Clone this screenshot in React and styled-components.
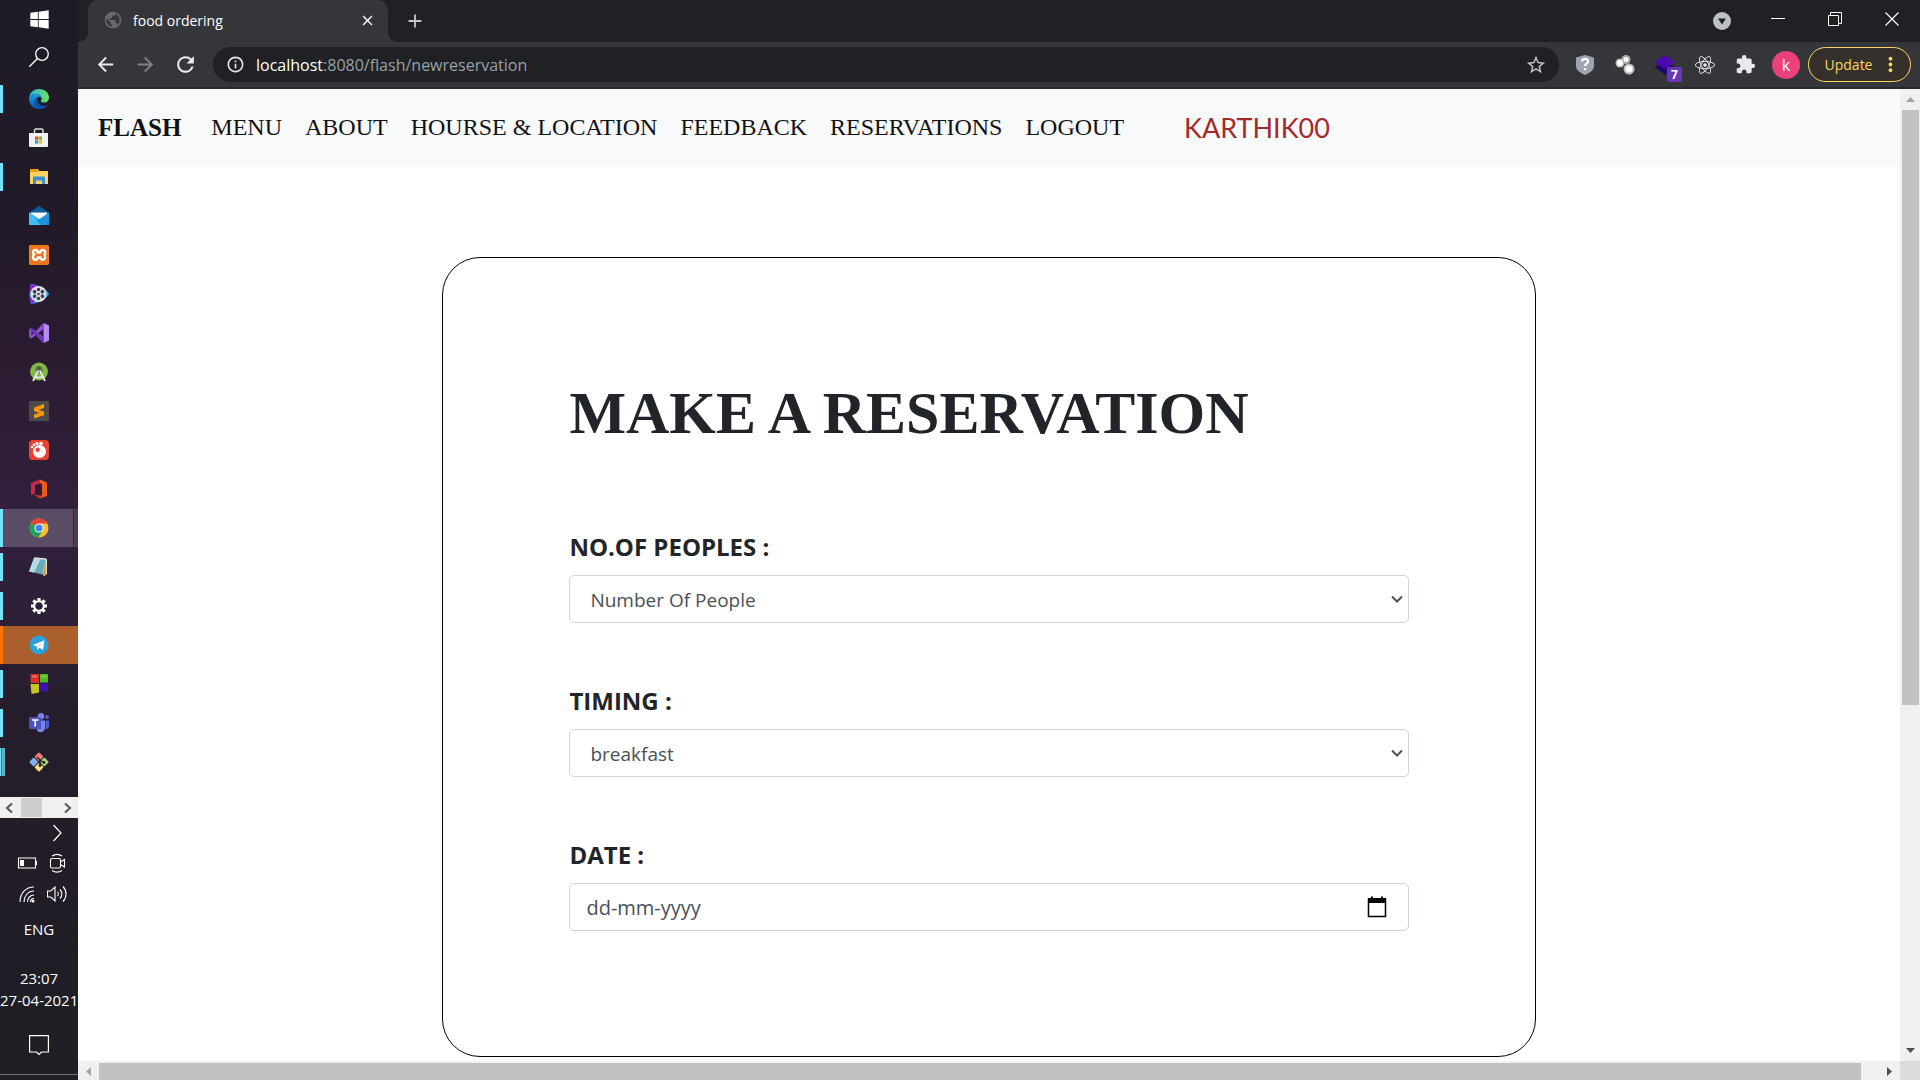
import React from "react";
import styled, { createGlobalStyle } from "styled-components";
import {
  MdArrowBack,
  MdArrowForward,
  MdClose,
  MdExtension,
  MdInfoOutline,
  MdMoreVert,
  MdPublic,
  MdRefresh,
  MdStarBorder,
  MdAdd,
} from "react-icons/md";
import { FaReact, FaWindows } from "react-icons/fa";
import { SiXampp } from "react-icons/si";

const ui = `"Segoe UI", "Open Sans", "Noto Sans", sans-serif`;
const serif = `"Liberation Serif", serif`;

const GlobalStyle = createGlobalStyle`
  * { box-sizing: border-box; }
  html, body { margin: 0; height: 100%; overflow: hidden; }
  body { font-family: ${ui}; background: #fff; }
  button, input, select { font: inherit; margin: 0; }
  button { border: 0; padding: 0; background: none; color: inherit; display: flex; align-items: center; justify-content: center; }
  svg { display: block; flex: none; }
`;

const Desktop = styled.div`
  display: flex;
  height: 100vh;
`;

/* ---------- taskbar ---------- */

const Taskbar = styled.aside`
  flex: none;
  width: 78px;
  display: flex;
  flex-direction: column;
  color: #fff;
  background: linear-gradient(#1e1b26 0%, #211a28 20%, #2d1c33 36%, #32203d 48%, #2b1f35 58%, #251d29 68%, #241c29 78%, #1f1d26 88%, #1f2025 100%);
`;

const SystemButton = styled.button`
  height: 38px;
  width: 100%;
`;

const Apps = styled.nav`
  display: flex;
  flex-direction: column;
  margin-top: 4px;
  flex: 1;
`;

const AppButton = styled.button`
  position: relative;
  height: 38px;
  width: 100%;
  margin-bottom: 1px;
  background: ${(p) => (p.$state === "active" ? "linear-gradient(90deg, #5c4d66 73px, #37293f 73px, #37293f 74px, #4b3d56 74px)" : p.$state === "alert" ? "#aa5f2c" : "none")};

  &::before {
    content: "";
    position: absolute;
    left: 0;
    top: ${(p) => (p.$state === "active" || p.$state === "alert" ? 0 : 5)}px;
    bottom: ${(p) => (p.$state === "active" || p.$state === "alert" ? 0 : 5)}px;
    width: ${(p) => (p.$state === "stack" ? 5 : p.$state ? 3 : 0)}px;
    background: ${(p) => (p.$state === "alert" ? "#ff7300" : p.$state === "stack" ? "linear-gradient(90deg, #76e3fb 1px, #3f7f90 1px, #3f7f90 2px, #5db3c8 2px)" : "#76e3fb")};
  }
`;

const TaskScroll = styled.div`
  height: 21px;
  padding: 1px 5px 1px 4px;
  display: flex;
  align-items: center;
  background: #f0f0f0;
  color: #555;
`;

const TaskThumb = styled.div`
  width: 21px;
  height: 100%;
  margin-left: 5px;
  margin-right: auto;
  background: #cdcdcd;
`;

const Tray = styled.div`
  display: grid;
  grid-template-columns: 30px 30px;
  grid-template-rows: 30px 30px 31px;
  justify-content: center;
  padding-left: 6px;
`;

const TrayButton = styled.button`
  grid-column: ${(p) => p.$column || "auto"};
`;

const TrayText = styled.div`
  margin-top: 9px;
  text-align: center;
  font-size: 15px;
  line-height: 22px;
  white-space: nowrap;
`;

const Clock = styled(TrayText)`
  margin-top: 27px;
  margin-bottom: 12px;
`;

const NoticeButton = styled.button`
  height: 43px;
  width: 100%;
`;

const TaskEnd = styled.div`
  height: 6px;
  margin-top: 8px;
  border-top: 1px solid #6f7174;
`;

/* ---------- browser frame ---------- */

const Browser = styled.div`
  flex: 1;
  min-width: 0;
  display: flex;
  flex-direction: column;
`;

const TabStrip = styled.header`
  height: 42px;
  display: flex;
  align-items: stretch;
  padding-left: 10px;
  background: #202124;
  color: #fff;
`;

const Tab = styled.div`
  position: relative;
  width: 300px;
  display: flex;
  align-items: center;
  padding: 0 12px 2px 15px;
  gap: 10px;
  font-size: 14px;
  background: #35363a;
  border-radius: 10px 10px 0 0;

  &::before, &::after {
    content: "";
    position: absolute;
    bottom: 0;
    width: 10px;
    height: 10px;
  }
  &::before { left: -10px; background: radial-gradient(circle at 0 0, #202124 10px, #35363a 10px); }
  &::after { right: -10px; background: radial-gradient(circle at 100% 0, #202124 10px, #35363a 10px); }

  button { margin-left: auto; }
`;

const NewTab = styled.button`
  width: 54px;
  color: #c4c7ca;
`;

const WindowButtons = styled.div`
  display: flex;
  margin-left: auto;
`;

const WindowButton = styled.button`
  width: 57px;
  height: 37px;
`;

const TabSearch = styled(WindowButton)`
  width: 54px;
  height: 42px;
`;

const Toolbar = styled.div`
  height: 47px;
  display: flex;
  align-items: center;
  padding: 0 9px 0 7px;
  background: #35363a;
  border-bottom: 2px solid #27282b;
  color: #e8eaed;
`;

const NavButton = styled.button`
  width: 40px;
  height: 35px;
  color: ${(p) => (p.$dim ? "#808184" : "#e8eaed")};
`;

const AddressBar = styled.div`
  flex: 1;
  height: 35px;
  margin-left: 8px;
  margin-right: 6px;
  display: flex;
  align-items: center;
  padding: 0 12px 0 13px;
  gap: 11px;
  border-radius: 18px;
  background: #202124;
  font-size: 16px;
`;

const Address = styled.div`
  flex: 1;
  color: #9aa0a6;
  span { color: #fff; }
`;

const ExtensionButton = styled.button`
  position: relative;
  width: 40px;
  height: 35px;
`;

const Badge = styled.span`
  position: absolute;
  right: 3px;
  bottom: 0;
  width: 15px;
  height: 15px;
  border-radius: 2px;
  background: #6838b8;
  color: #fff;
  font-size: 12px;
  font-weight: 700;
  line-height: 15px;
`;

const Avatar = styled.button`
  width: 28px;
  height: 28px;
  margin: 0 8px 0 7px;
  border-radius: 50%;
  background: #ec407a;
  color: #fff;
  font-size: 16px;
`;

const Update = styled.button`
  width: 103px;
  height: 35px;
  gap: 7px;
  border: 1px solid #fdd663;
  border-radius: 18px;
  background: #35302b;
  color: #fdd663;
  font-size: 14px;
  padding-left: 8px;
`;

/* ---------- page ---------- */

const Viewport = styled.div`
  flex: 1;
  min-height: 0;
  display: grid;
  grid-template-columns: minmax(0, 1fr) 20px;
  grid-template-rows: minmax(0, 1fr) 19px;
`;

const Page = styled.div`
  overflow: hidden;
  background: #fff;
`;

const Navbar = styled.nav`
  height: 77px;
  display: flex;
  align-items: center;
  padding: 0 20px;
  gap: 23px;
  background: #f8f9fa;
  font-family: ${serif};
  font-size: 24px;
`;

const Brand = styled.a`
  color: #111;
  font-size: 25px;
  font-weight: 700;
  text-decoration: none;
  margin-right: 7px;
`;

const NavLink = styled.a`
  color: #111;
  text-decoration: none;
  white-space: nowrap;
`;

const UserLink = styled.a`
  margin-left: 37px;
  color: #a52a2a;
  font-family: "Comic Sans MS", Lato, sans-serif;
  font-size: 27px;
  text-decoration: none;
`;

const Card = styled.form`
  width: 60%;
  margin: 91px auto 60px;
  padding: 119px 126px 125px;
  border: 1px solid #000;
  border-radius: 38px;
  display: flex;
  flex-direction: column;
  gap: 60px;
`;

const Title = styled.h1`
  margin: 0 0 20px;
  color: #212529;
  font-family: ${serif};
  font-size: 60px;
  line-height: 72px;
  white-space: nowrap;
`;

const Field = styled.div`
  display: flex;
  flex-direction: column;
  gap: 10px;
`;

const Label = styled.label`
  color: #212529;
  font-size: 24px;
  font-weight: 700;
  line-height: 36px;
`;

const SelectBox = styled.div`
  position: relative;
  svg { position: absolute; right: 6px; top: 18px; pointer-events: none; }
`;

const Select = styled.select`
  display: block;
  appearance: none;
  height: 48px;
  width: 100%;
  padding: 1px 30px 0 20px;
  border: 1px solid #ced4da;
  border-radius: 5px;
  background: #fff;
  color: #495057;
  font-size: 19px;
`;

const DateBox = styled.div`
  height: 48px;
  display: flex;
  align-items: center;
  padding: 0 20px 0 16px;
  border: 1px solid #ced4da;
  border-radius: 5px;
`;

const DateInput = styled.input`
  flex: 1;
  min-width: 0;
  border: 0;
  padding: 0;
  outline: 0;
  background: none;
  font-size: 20px;
  color: #495057;
  &::placeholder { color: #495057; opacity: 1; }
`;

const ScrollTrack = styled.div`
  display: flex;
  flex-direction: ${(p) => (p.$vertical ? "column" : "row")};
  background: #f0f0f0;
  padding: ${(p) => (p.$vertical ? "0 1px 0 2px" : "2px 0 0 0")};
`;

const ScrollArrow = styled.button`
  flex: none;
  width: ${(p) => (p.$vertical ? 17 : 21)}px;
  height: ${(p) => (p.$vertical ? 21 : 17)}px;
  color: ${(p) => (p.$off ? "#a3a3a3" : "#505050")};
`;

const ScrollThumb = styled.div`
  flex: ${(p) => p.$part};
  background: #c1c1c1;
`;

const ScrollRest = styled.div`
  flex: ${(p) => p.$part};
`;

const Corner = styled.div`
  background: #dcdcdc;
`;

/* ---------- drawings ---------- */

const Icon = ({ size = 20, children, box = "0 0 20 20" }) => (
  <svg width={size} height={size} viewBox={box} fill="none" aria-hidden="true">
    {children}
  </svg>
);

const Triangle = ({ turn }) => (
  <svg width="9" height="9" viewBox="0 0 9 9" fill="currentColor" transform={`rotate(${turn})`} aria-hidden="true">
    <path d="M0 7 4.500 2 9 7z" />
  </svg>
);

const Chevron = () => (
  <Icon size={12} box="0 0 12 12"><path d="M1 3.500 6 8.500 11 3.500" stroke="#495057" strokeWidth="2" /></Icon>
);

const XamppTile = styled.span`
  width: 20px;
  height: 20px;
  background: #fff;
  border-radius: 3px;
`;

const apps = [
  ["Edge", "open", <Icon>
    <defs>
      <linearGradient id="edgeGreen" x1="0" x2="1"><stop stopColor="#2fb5e8" /><stop offset="1" stopColor="#6be05a" /></linearGradient>
      <linearGradient id="edgeBlue" x1="0" x2="0" y1="0" y2="1"><stop stopColor="#1b9de2" /><stop offset="1" stopColor="#0d57a8" /></linearGradient>
    </defs>
    <path d="M0 9C1 3 5 0 10 0c6 0 10 4 10 8.500 0 3-2 5-5 5-2 0-3.500-.7-3.300-1.500.8-1 1-1.700 1-2.500C12.500 7 10 5 6.500 5 3.500 5 1 6.500 0 9z" fill="url(#edgeGreen)" />
    <path d="M0 10c0-3 3-5 6.500-5 3.500 0 6 2 6 4.500-1-1.700-2.500-2-3.500-1.300-3 1.500-3.500 5.500-1 8 3 3 7 2.500 10.500.3C16.500 19 13.500 20 10 20 4 20 0 15.500 0 10z" fill="url(#edgeBlue)" />
    <path d="M9 8.200c-4 1.800-4.500 6-2.500 8.800 2 2.500 5 3.200 8 2 2-.8 3.500-1.900 4.200-3.200-3.500 1.700-7.200.9-9-1.600-1.300-1.900-1.500-4-.7-6z" fill="#0c4fa0" />
  </Icon>],
  ["Store", "", <Icon>
    <path d="M5.500 6V2.500c0-.8.500-1.500 1.500-1.500h5.500c1 0 1.500.7 1.500 1.500V6" stroke="#ddd" strokeWidth="1.500" />
    <path d="M0 5h19v13a1 1 0 0 1-1 1H1a1 1 0 0 1-1-1z" fill="#f1f1f1" />
    <path d="M6 8.500h3.300v3.300H6z" fill="#e2512c" /><path d="M9.800 8.500h3.300v3.300H9.800z" fill="#7db72f" />
    <path d="M6 12.300h3.300v3.300H6z" fill="#23a0e0" /><path d="M9.800 12.300h3.300v3.300H9.800z" fill="#fdb913" />
  </Icon>],
  ["Explorer", "open", <Icon>
    <path d="M1 2h8l1 2h9v13H1z" fill="#fdd260" /><path d="M1 2h8l1 2-1 1H1z" fill="#e5a20c" />
    <path d="M4 17v-6.500a1 1 0 0 1 1-1h10a1 1 0 0 1 1 1V17h-3v-3.500H7V17z" fill="#3a8fdc" />
  </Icon>],
  ["Mail", "", <Icon>
    <path d="M0 6.500 10 0l10 6.500V12H0z" fill="#0f5a9e" /><path d="M2 6.500h16V13H2z" fill="#f5f6f7" />
    <path d="M0 6.500 20 19H0z" fill="#37b6ee" /><path d="M20 6.500 7 15.500 12 19h8z" fill="#1d93dd" /><path d="M0 6.500V19h12L6.500 13.500z" fill="#4bc5f5" opacity=".6" />
  </Icon>],
  ["Xampp", "", <XamppTile><SiXampp size={20} color="#ee741f" /></XamppTile>],
  ["Video editor", "", <Icon>
    <path d="M2 0c6 0 17 6 18 10-1 4-12 10-18 10C0 15 0 5 2 0z" fill="#26a9dc" /><path d="M1 1c4-1 8 1 8 1L4 8H1zM1 13l5 5-3 2c-2-1-2-4-2-7z" fill="#8a24d8" />
    <circle cx="9.500" cy="10" r="8" fill="#dfe2e8" /><circle cx="9.500" cy="10" r="1.300" fill="#444b5d" />
    {[0, 60, 120, 180, 240, 300].map((a) => <circle key={a} cx="9.500" cy="5.500" r="1.800" fill="#3b4052" transform={`rotate(${a} 9.500 10)`} />)}
  </Icon>],
  ["Visual Studio", "", <Icon>
    <path d="M14.500 0 20 2.500v15L14.500 20z" fill="#b58af5" /><path d="M14.500 0v6L2.500 15.500 0 14V6l2.500-1 12 9v6L2.500 7.800v4.600z" fill="#8a4fd0" /><path d="M0 6l2.500-1L14.500 14v6z" fill="#6d36b0" />
  </Icon>],
  ["Android Studio", "", <Icon>
    <circle cx="10" cy="9.500" r="9" fill="#7fb846" /><circle cx="10" cy="7.500" r="3.600" fill="#5b743f" />
    <path d="M9.500 8 4 19M10.500 8 16 19M6 14.500c2.500 1.500 5.500 1.500 8 0" stroke="#eef0ee" strokeWidth="1.700" /><circle cx="10" cy="7" r="1.700" fill="#555" />
  </Icon>],
  ["Sublime", "", <Icon>
    <rect width="20" height="20" rx="1" fill="#4b4b4b" /><path d="M5 6.500 15 3v4l-5.500 2L15 10.500v3.700L5 17.500v-4l5.500-1.800L5 10z" fill="#ff9800" />
  </Icon>],
  ["Recorder", "", <Icon>
    <rect width="20" height="20" rx="4" fill="#eb4132" /><circle cx="10.500" cy="11.500" r="6.500" fill="#fff" /><circle cx="8.700" cy="9.700" r="2.200" fill="#eb4132" />
    <g fill="#fff"><circle cx="3" cy="7" r="1.200" /><circle cx="5" cy="4.800" r="1.400" /><circle cx="8" cy="3.600" r="1.500" /><circle cx="12" cy="3.600" r="1.800" /></g>
  </Icon>],
  ["Office", "", <Icon>
    <path d="M11 .5 2 4v12l4-1.500V6l5-1.500z" fill="#c22a4c" /><path d="M11 .5l7 3V17l-7 2.500z" fill="#ea5a1e" /><path d="M11 4.500 13 5v11.500l-2 .5z" fill="#2d1c33" /><path d="M6 6.500 11.500 4.800v12L6 14.500z" fill="#2d1c33" /><path d="m4 15.500 9 1.200-2 2.800z" fill="#d2331f" />
  </Icon>],
  ["Chrome", "active", <Icon>
    <circle cx="10" cy="10" r="9.500" fill="#fbc02d" /><path d="M10 10 1.800 5.200A9.500 9.500 0 0 1 18.300 5.500H10z" fill="#e94235" />
    <path d="M10 10 1.800 5.200A9.500 9.500 0 0 0 9.300 19.500l4.500-7.300z" fill="#1da05b" />
    <circle cx="10" cy="10" r="4.600" fill="#fff" /><circle cx="10" cy="10" r="3.600" fill="#4285f4" />
  </Icon>],
  ["Notepad", "open", <Icon>
    <path d="M5 1.500 18 2v15l-3 2z" fill="#e9e2c4" /><path d="M5 1 17 2 13.500 17.500 0 14.500z" fill="#69aab8" /><path d="M5 1l7 .6L5 15.600 0 14.500z" fill="#b3dce2" /><path d="M13.500 17.500 17 4v14l-2 1z" fill="#c7a862" /><path d="M5 1 17 2" stroke="#dadada" strokeWidth="1.500" />
  </Icon>],
  ["Settings", "open", <Icon size={16}>
    <circle cx="10" cy="10" r="6" stroke="#fff" strokeWidth="2.600" />
    {[0, 45, 90, 135, 180, 225, 270, 315].map((a) => <path key={a} d="M8 0h4v4H8z" fill="#fff" transform={`rotate(${a} 10 10)`} />)}
  </Icon>],
  ["Telegram", "alert", <Icon><circle cx="10" cy="10" r="9.500" fill="#2ba0da" /><path d="M4 10 15.500 5.300 14 15l-3.500-2.300L8.500 15l-.8-3.600z" fill="#fff" /><path d="M7.700 11.400 13.500 7.500 9 12.200z" fill="#b9d8ea" /></Icon>],
  ["Blocks", "open", <Icon>
    <path d="M1.500 0H10v9H1.500z" fill="#d3302b" /><path d="M11 0h8v8.500h-8z" fill="#4fbb23" /><path d="M1.500 10H10v8.500L2.500 20z" fill="#c9c325" /><path d="M11 9.500h8V18l-8-1z" fill="#3c14b4" />
    <path d="M3 1.500h5v2H3z" fill="#ee8d83" opacity=".7" /><path d="M12.500 1.500h5v2h-5z" fill="#9be07d" opacity=".6" />
  </Icon>],
  ["Teams", "open", <Icon>
    <circle cx="12" cy="3.200" r="3.200" fill="#7b83eb" /><circle cx="18" cy="4" r="2" fill="#5059c9" /><path d="M8 7.500h8v7a4.500 4.500 0 0 1-8 3z" fill="#7b83eb" /><path d="M16.500 7.500H20v6a3 3 0 0 1-3.500 2.500z" fill="#5059c9" />
    <rect y="4" width="12" height="12" rx="1" fill="#4b53bc" /><path d="M3 7h6.500M6.200 7v6.500" stroke="#fff" strokeWidth="1.600" />
  </Icon>],
  ["Git", "stack", <Icon>
    <g transform="rotate(45 10 10)"><rect x="3" y="3" width="6.500" height="6.500" rx="1" fill="#f07c70" /><rect x="10.500" y="3" width="6.500" height="6.500" rx="1" fill="#a5dc7d" /><rect x="3" y="10.500" width="6.500" height="6.500" rx="1" fill="#7db0f5" /><rect x="10.500" y="10.500" width="6.500" height="6.500" rx="1" fill="#fbdf7c" /></g>
    <path d="M8 5l3 3v5M11 8l3.500 2.500" stroke="#222" strokeWidth="1.300" /><circle cx="11" cy="13.500" r="1.400" fill="#222" /><circle cx="15" cy="10.500" r="1.400" fill="#222" />
  </Icon>],
];

const links = ["MENU", "ABOUT", "HOURSE & LOCATION", "FEEDBACK", "RESERVATIONS", "LOGOUT"];

function TaskbarPanel() {
  return (
    <Taskbar>
      <SystemButton aria-label="Start"><FaWindows size={21} /></SystemButton>
      <SystemButton aria-label="Search">
        <Icon><circle cx="13" cy="7" r="6.300" stroke="#fff" strokeWidth="1.300" /><path d="M8.500 11.500 0 20" stroke="#fff" strokeWidth="1.400" /></Icon>
      </SystemButton>
      <Apps>
        {apps.map(([name, state, icon]) => (
          <AppButton key={name} $state={state} aria-label={name}>{icon}</AppButton>
        ))}
      </Apps>
      <TaskScroll>
        <button aria-label="Scroll left"><Icon size={12} box="0 0 12 12"><path d="M8 1.500 3 6l5 4.500" stroke="currentColor" strokeWidth="2" /></Icon></button>
        <TaskThumb />
        <button aria-label="Scroll right"><Icon size={12} box="0 0 12 12"><path d="m4 1.500 5 4.500-5 4.500" stroke="currentColor" strokeWidth="2" /></Icon></button>
      </TaskScroll>
      <Tray>
        <TrayButton $column="2" aria-label="Show hidden icons"><Icon><path d="m6.500 2 7.500 8-7.500 8" stroke="#fff" strokeWidth="1.200" /></Icon></TrayButton>
        <TrayButton aria-label="Battery"><Icon><path d="M1.500 5h17v10h-17zM19.500 8v4" stroke="#fff" strokeWidth="1.100" /><path d="M3 7h4v6H3z" fill="#fff" /></Icon></TrayButton>
        <TrayButton aria-label="Meet now"><Icon><rect x="3.500" y="5.500" width="10" height="9.500" rx="1.500" stroke="#fff" strokeWidth="1.100" /><path d="m13.500 9 4-2.500v7.500l-4-2.500M5 3c3-2 7-2 10 0M5 17.500c3 2 7 2 10 0" stroke="#fff" strokeWidth="1.100" /></Icon></TrayButton>
        <TrayButton aria-label="Network"><Icon><g stroke="#fff" strokeWidth="1.100"><path d="M3 18C3 9 9 3 17 3M7 18c0-6 4-11 10-11M10.500 18c0-4 3-7 6.500-7M13.500 18c0-2 1.500-3.500 3.500-3.500" /></g><circle cx="16" cy="17" r="1.500" fill="#fff" /></Icon></TrayButton>
        <TrayButton aria-label="Volume"><Icon><path d="M.5 7h3.300L8 3v14l-4.200-4H.5zM10.500 8c1 1 1 3 0 4M13 5.500c2.500 2.500 2.500 6.500 0 9M16 2.500c4 4 4 11 0 15" stroke="#fff" strokeWidth="1.100" /></Icon></TrayButton>
      </Tray>
      <TrayText>ENG</TrayText>
      <Clock>23:07<br />27-04-2021</Clock>
      <NoticeButton aria-label="Notifications"><Icon><path d="M.6.600h18.800v16.400H12.500L10 19.500 7.500 17H.6z" stroke="#fff" strokeWidth="1.200" /></Icon></NoticeButton>
      <TaskEnd />
    </Taskbar>
  );
}

function BrowserFrame() {
  return (
    <>
      <TabStrip>
        <Tab>
          <MdPublic size={20} color="#66696d" />
          food ordering
          <button aria-label="Close tab"><MdClose size={17} /></button>
        </Tab>
        <NewTab aria-label="New tab"><MdAdd size={22} /></NewTab>
        <WindowButtons>
          <TabSearch aria-label="Search tabs"><Icon size={18} box="0 0 18 18"><circle cx="9" cy="9" r="9" fill="#bdc1c6" /><path d="M5 6.500h8L9 12.500z" fill="#202124" /></Icon></TabSearch>
          <WindowButton aria-label="Minimize"><Icon size={14} box="0 0 14 14"><path d="M0 6.500h14" stroke="#fff" /></Icon></WindowButton>
          <WindowButton aria-label="Restore"><Icon size={14} box="0 0 14 14"><path d="M.5 3.500h10v10H.5zM2.500 3V.5h11v11H11" stroke="#fff" /></Icon></WindowButton>
          <WindowButton aria-label="Close"><Icon size={14} box="0 0 14 14"><path d="m.5.500 13 13M13.500.500l-13 13" stroke="#fff" strokeWidth="1.200" /></Icon></WindowButton>
        </WindowButtons>
      </TabStrip>
      <Toolbar>
        <NavButton aria-label="Back"><MdArrowBack size={23} /></NavButton>
        <NavButton $dim aria-label="Forward"><MdArrowForward size={23} /></NavButton>
        <NavButton aria-label="Reload"><MdRefresh size={25} /></NavButton>
        <AddressBar>
          <MdInfoOutline size={19} />
          <Address><span>localhost</span>:8080/flash/newreservation</Address>
          <button aria-label="Bookmark"><MdStarBorder size={22} color="#c4c7ca" /></button>
        </AddressBar>
        <ExtensionButton aria-label="Privacy">
          <Icon><path d="M1 2.500 10 0l9 2.500V11c0 4-4 7-9 9-5-2-9-5-9-9z" fill="#9da3b4" /><path d="M7 6.500c0-3.500 6-3.500 6 0 0 2-3 2.300-3 4.500M10 13v2.200" stroke="#fff" strokeWidth="2.200" /></Icon>
        </ExtensionButton>
        <ExtensionButton aria-label="Circles">
          <Icon><circle cx="5" cy="8" r="4.500" fill="#bbb" /><circle cx="11" cy="4.500" r="4.500" fill="#aaa" /><circle cx="14" cy="14" r="5.500" fill="#bbb" /><circle cx="5" cy="8" r="3" fill="#fff" /><circle cx="11" cy="4.500" r="2.500" fill="#fff" /><circle cx="14" cy="14" r="3.500" fill="#fff" /></Icon>
        </ExtensionButton>
        <ExtensionButton aria-label="Layers">
          <Icon><path d="m0 12 10-6 10 6-10 8z" fill="#20076b" /><path d="m0 7 10-7 10 7-10 7z" fill="#4a0ab0" /></Icon>
          <Badge>7</Badge>
        </ExtensionButton>
        <ExtensionButton aria-label="React tools"><FaReact size={20} /></ExtensionButton>
        <ExtensionButton aria-label="Extensions"><MdExtension size={21} /></ExtensionButton>
        <Avatar aria-label="Profile k">k</Avatar>
        <Update>Update<MdMoreVert size={23} /></Update>
      </Toolbar>
    </>
  );
}

function ReservationPage() {
  return (
    <Page>
      <Navbar>
        <Brand href="#">FLASH</Brand>
        {links.map((l) => <NavLink key={l} href="#">{l}</NavLink>)}
        <UserLink href="#">KARTHIK00</UserLink>
      </Navbar>
      <Card>
        <Title>MAKE A RESERVATION</Title>
        <Field>
          <Label htmlFor="people">NO.OF PEOPLES :</Label>
          <SelectBox>
            <Select id="people"><option>Number Of People</option></Select>
            <Chevron />
          </SelectBox>
        </Field>
        <Field>
          <Label htmlFor="timing">TIMING :</Label>
          <SelectBox>
            <Select id="timing"><option>breakfast</option></Select>
            <Chevron />
          </SelectBox>
        </Field>
        <Field>
          <Label htmlFor="date">DATE :</Label>
          <DateBox>
            <DateInput id="date" placeholder="dd-mm-yyyy" />
            <button type="button" aria-label="Pick a date">
              <Icon size={22} box="0 0 22 22"><path d="M2.500 3h17v17.500h-17z" stroke="#000" strokeWidth="1.500" /><path d="M2 2h18v5H2zM5 .5h2V3H5zM15 .5h2V3h-2z" fill="#000" /></Icon>
            </button>
          </DateBox>
        </Field>
      </Card>
    </Page>
  );
}

export default function App() {
  return (
    <>
      <GlobalStyle />
      <Desktop>
        <TaskbarPanel />
        <Browser>
          <BrowserFrame />
          <Viewport>
            <ReservationPage />
            <ScrollTrack $vertical>
              <ScrollArrow $vertical $off aria-label="Scroll up"><Triangle turn={0} /></ScrollArrow>
              <ScrollThumb $part={595} />
              <ScrollRest $part={335} />
              <ScrollArrow $vertical aria-label="Scroll down"><Triangle turn={180} /></ScrollArrow>
            </ScrollTrack>
            <ScrollTrack>
              <ScrollArrow $off aria-label="Scroll page left"><Triangle turn={-90} /></ScrollArrow>
              <ScrollThumb $part={1762} />
              <ScrollRest $part={18} />
              <ScrollArrow aria-label="Scroll page right"><Triangle turn={90} /></ScrollArrow>
            </ScrollTrack>
            <Corner />
          </Viewport>
        </Browser>
      </Desktop>
    </>
  );
}
